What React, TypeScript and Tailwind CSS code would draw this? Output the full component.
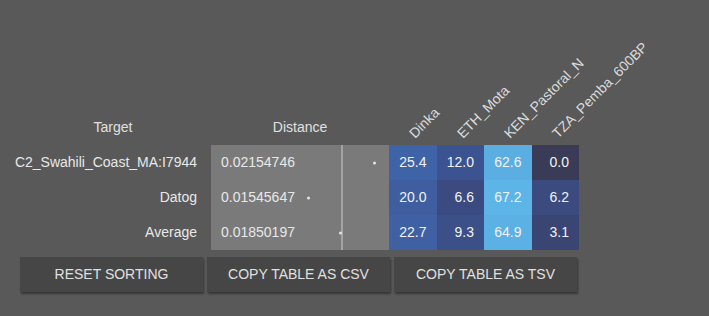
import React from "react";

const cols = ["Dinka", "ETH_Mota", "KEN_Pastoral_N", "TZA_Pemba_600BP"];

const rows = [
  {
    target: "C2_Swahili_Coast_MA:I7944",
    dist: "0.02154746",
    dot: 162,
    vals: ["25.4", "12.0", "62.6", "0.0"],
    colors: ["#3f63a7", "#3c5391", "#5aaee2", "#3a3b57"],
  },
  {
    target: "Datog",
    dist: "0.01545647",
    dot: 96,
    vals: ["20.0", "6.6", "67.2", "6.2"],
    colors: ["#3e5e9f", "#3b4a80", "#5db4e7", "#3b4a7f"],
  },
  {
    target: "Average",
    dist: "0.01850197",
    dot: 128,
    vals: ["22.7", "9.3", "64.9", "3.1"],
    colors: ["#3f61a3", "#3b4f89", "#5bb0e4", "#3a4574"],
  },
];

export default function App() {
  return (
    <div className="min-h-screen w-full bg-[#595959] font-['Liberation_Sans',Arial,sans-serif] text-[14px] text-[#e8e8e8]">
      <div className="pl-[15px]">
        {/* header row */}
        <div className="flex h-[145px] items-end">
          <div className="w-[196px] pb-[7px] text-center text-[#e0e0e0]">Target</div>
          <div className="w-[178px] pb-[7px] text-center text-[#e0e0e0]">Distance</div>
          {cols.map((c) => (
            <div key={c} className="relative h-full w-[47.5px]">
              <span className="absolute bottom-[4px] left-[28px] origin-bottom-left -rotate-45 whitespace-nowrap leading-[16px] text-[#dcdcdc]">
                {c}
              </span>
            </div>
          ))}
        </div>
        {/* body */}
        <div className="flex">
          <div className="flex w-[196px] flex-col">
            {rows.map((r) => (
              <div key={r.target} className="flex h-[35px] items-center justify-end pr-[14px]">
                {r.target}
              </div>
            ))}
          </div>
          <div className="relative flex w-[178px] flex-col bg-[#7a7a7a]">
            <div className="absolute bottom-0 left-[130px] top-0 w-[2px] bg-[#a4a4a4]" />
            {rows.map((r) => (
              <div key={r.dist} className="relative flex h-[35px] items-center pl-[10px]">
                {r.dist}
                <span
                  className="absolute top-1/2 h-[3px] w-[3px] -translate-y-1/2 rounded-full bg-[#e6e6e6]"
                  style={{ left: r.dot }}
                />
              </div>
            ))}
          </div>
          <div className="grid w-[190px] grid-cols-4">
            {rows.map((r) =>
              r.vals.map((v, i) => (
                <div
                  key={r.target + i}
                  className="flex h-[35px] items-center justify-end pr-[10px] text-[#f2f2f2]"
                  style={{ backgroundColor: r.colors[i] }}
                >
                  {v}
                </div>
              ))
            )}
          </div>
        </div>
        {/* buttons */}
        <div className="ml-[5px] mt-[7px] flex gap-[4px]">
          {["RESET SORTING", "COPY TABLE AS CSV", "COPY TABLE AS TSV"].map((b) => (
            <button
              key={b}
              className="flex h-[35px] w-[183px] items-center justify-center bg-[#464646] text-[14px] text-[#e0e0e0] shadow-[1px_2px_2px_rgba(0,0,0,0.4)]"
            >
              {b}
            </button>
          ))}
        </div>
      </div>
    </div>
  );
}
